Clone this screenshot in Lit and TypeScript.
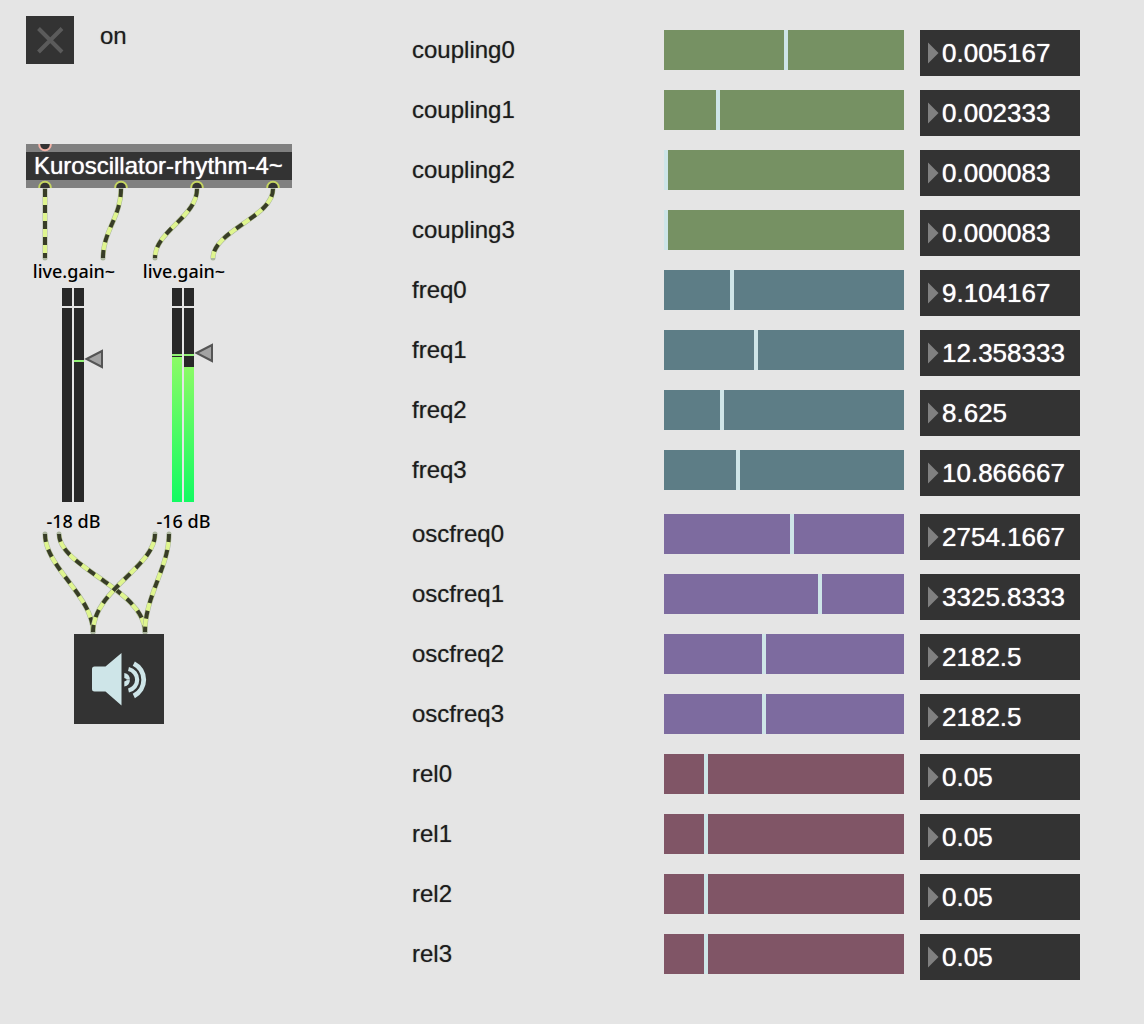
import { LitElement, html, svg, css } from "lit";
import { customElement, property } from "lit/decorators.js";

interface Param {
  name: string;
  value: string;
  position: number;
}

interface ParamGroup {
  tone: string;
  params: Param[];
}

/* Slider positions run from 0 to 236. */
const GROUPS: ParamGroup[] = [
  {
    tone: "green",
    params: [
      { name: "coupling0", value: "0.005167", position: 120 },
      { name: "coupling1", value: "0.002333", position: 52 },
      { name: "coupling2", value: "0.000083", position: 0 },
      { name: "coupling3", value: "0.000083", position: 0 },
    ],
  },
  {
    tone: "teal",
    params: [
      { name: "freq0", value: "9.104167", position: 66 },
      { name: "freq1", value: "12.358333", position: 90 },
      { name: "freq2", value: "8.625", position: 56 },
      { name: "freq3", value: "10.866667", position: 72 },
    ],
  },
  {
    tone: "violet",
    params: [
      { name: "oscfreq0", value: "2754.1667", position: 126 },
      { name: "oscfreq1", value: "3325.8333", position: 154 },
      { name: "oscfreq2", value: "2182.5", position: 98 },
      { name: "oscfreq3", value: "2182.5", position: 98 },
    ],
  },
  {
    tone: "wine",
    params: [
      { name: "rel0", value: "0.05", position: 40 },
      { name: "rel1", value: "0.05", position: 40 },
      { name: "rel2", value: "0.05", position: 40 },
      { name: "rel3", value: "0.05", position: 40 },
    ],
  },
];

/* One parameter: its name, a slider and a number box. */
@customElement("param-row")
export class ParamRow extends LitElement {
  @property({ attribute: false }) param!: Param;
  @property() tone = "green";

  static styles = css`
    :host {
      display: grid;
      grid-template-columns: 236px minmax(0, 1fr) 160px;
      column-gap: 16px;
      align-items: start;
      color: #1c1c1c;
      font-family: "Liberation Sans", Arial, sans-serif;
    }
    .name {
      font-size: 24px;
      line-height: 40px;
      text-shadow: 0 0 1px rgba(28, 28, 28, 0.5);
    }
    .slider {
      appearance: none;
      display: block;
      width: 100%;
      height: 40px;
      margin: 0;
      background: #769163;
    }
    .slider::-webkit-slider-thumb {
      appearance: none;
      width: 4px;
      height: 40px;
      background: #cee5e8;
    }
    .teal {
      background: #5d7d86;
    }
    .violet {
      background: #7d6b9f;
    }
    .wine {
      background: #805566;
    }
    .number {
      display: flex;
      align-items: center;
      gap: 3px;
      height: 46px;
      padding-left: 8px;
      background: #333333;
    }
    .marker {
      flex: none;
      display: block;
      width: 11px;
      height: 22px;
    }
    .field {
      flex: 1;
      min-width: 0;
      height: 46px;
      padding: 0;
      border: 0;
      background: transparent;
      color: #ffffff;
      font-family: inherit;
      font-size: 26px;
      text-shadow: 0 0 1px #ffffff;
    }
  `;

  render() {
    const { name, value, position } = this.param;
    return html`
      <label class="name" for="slider">${name}</label>
      <input
        id="slider"
        class="slider ${this.tone}"
        type="range"
        min="0"
        max="236"
        .value=${String(position)}
      />
      <div class="number">
        <svg class="marker" viewBox="0 0 11 22" aria-hidden="true">
          <path d="M0 0.5 L10.5 11 L0 21.5 Z" fill="#808080" />
        </svg>
        <input class="field" type="text" aria-label="${name} value" .value=${value} />
      </div>
    `;
  }
}

/* Stereo gain fader with level meters. */
@customElement("live-gain")
export class LiveGain extends LitElement {
  @property() level = "";
  @property({ type: Number }) fader = 0;
  @property({ attribute: false }) levels: number[] = [0, 0];
  @property({ attribute: false }) peaks: number[] = [-1, -1];

  static styles = css`
    :host {
      display: flex;
      flex-direction: column;
      align-items: center;
      width: 82px;
      color: #000000;
      font-family: "Noto Sans", sans-serif;
      font-size: 18px;
      font-weight: 500;
      line-height: 24px;
      white-space: nowrap;
    }
    .meters {
      display: flex;
      gap: 2px;
      align-self: stretch;
      height: 214px;
      margin: 5px 0 7px;
      padding-left: 29px;
    }
    .channel {
      position: relative;
      flex: none;
      display: flex;
      flex-direction: column;
      justify-content: flex-end;
      width: 10px;
      background: #282828;
    }
    .fill {
      background: linear-gradient(#8bfb66, #12fb62);
    }
    .zero,
    .peak {
      position: absolute;
      left: 0;
      right: 0;
      height: 2px;
      background: #e5e5e5;
    }
    .zero {
      top: 18px;
    }
    .peak {
      background: #93f277;
    }
    .fader {
      appearance: none;
      writing-mode: vertical-lr;
      direction: rtl;
      flex: none;
      width: 20px;
      height: 214px;
      margin: 0 0 0 -2px;
      background: transparent;
    }
    .fader::-webkit-slider-thumb {
      appearance: none;
      width: 20px;
      height: 20px;
      background: url("data:image/svg+xml,%3Csvg xmlns='http://www.w3.org/2000/svg' viewBox='0 0 20 20'%3E%3Cpath d='M2.5 10 L18 2 V18 Z' fill='%23a3a3a3' stroke='%23555555' stroke-width='2'/%3E%3C/svg%3E");
    }
    .level {
      padding-right: 1px;
    }
  `;

  render() {
    return html`
      <label for="fader">live.gain~</label>
      <div class="meters">
        ${this.levels.map(
          (height, i) => html`
            <div class="channel">
              <div class="fill" style="height:${height}px"></div>
              <div class="zero"></div>
              ${this.peaks[i] < 0
                ? ""
                : html`<div class="peak" style="top:${this.peaks[i]}px"></div>`}
            </div>
          `
        )}
        <input id="fader" class="fader" type="range" min="0" max="194" .value=${String(this.fader)} />
      </div>
      <div class="level">${this.level}</div>
    `;
  }
}

/* Patch cords as cubic curves from outlet to inlet. */
const CORDS = [
  "M45 189 L45 258",
  "M121 189 C121 217 103 231 103 258",
  "M197 189 C197 217 155 231 155 258",
  "M273 189 C273 217 213 231 213 258",
  "M45 534 C45 567 93 596 93 632",
  "M59 534 C59 567 145 590 145 632",
  "M155 534 C155 567 93 590 93 632",
  "M169 534 C169 567 145 596 145 632",
];

const OUTLETS = [19, 95, 171, 247];

@customElement("app-root")
export class AppRoot extends LitElement {
  static styles = css`
    :host {
      display: grid;
      grid-template-columns: 412px minmax(0, 1fr);
      min-height: 100vh;
      padding-right: 64px;
      box-sizing: border-box;
      background: #e5e5e5;
      color: #1c1c1c;
      font-family: "Liberation Sans", Arial, sans-serif;
      font-size: 24px;
    }
    .patch {
      position: relative;
    }
    .patch > * {
      position: absolute;
    }
    .cords {
      left: 0;
      top: 0;
      width: 412px;
      height: 740px;
    }
    .edge {
      fill: none;
      stroke: #abb59e;
      stroke-width: 5;
      stroke-linecap: round;
    }
    .light {
      fill: none;
      stroke: #dff58f;
      stroke-width: 4;
    }
    .dark {
      fill: none;
      stroke: #383d27;
      stroke-width: 4;
      stroke-dasharray: 8 8;
    }
    .switch {
      left: 26px;
      top: 16px;
      display: flex;
      gap: 26px;
    }
    .toggle {
      appearance: none;
      width: 48px;
      height: 48px;
      margin: 0;
      background: #333333
        url("data:image/svg+xml,%3Csvg xmlns='http://www.w3.org/2000/svg' viewBox='0 0 48 48'%3E%3Cpath d='M12.5 12.5 L36 36 M36 12.5 L12.5 36' stroke='%235b5b5b' stroke-width='4'/%3E%3C/svg%3E");
    }
    .caption {
      line-height: 40px;
      text-shadow: 0 0 1px rgba(28, 28, 28, 0.5);
    }
    .object {
      left: 26px;
      top: 144px;
      min-width: 250px;
      padding: 8px;
      background: linear-gradient(#808080 8px, #333333 8px 36px, #808080 36px);
      color: #ffffff;
      line-height: 28px;
      white-space: nowrap;
      text-shadow: 0 0 1px #ffffff;
    }
    .ports {
      position: absolute;
      left: 0;
      top: 0;
      width: 266px;
      height: 44px;
    }
    .gain-a {
      left: 33px;
      top: 259px;
    }
    .gain-b {
      left: 143px;
      top: 259px;
    }
    .dac {
      left: 74px;
      top: 634px;
      width: 90px;
      height: 90px;
      padding: 0;
      border: 0;
      background: #333333;
    }
    .speaker {
      display: block;
      width: 90px;
      height: 90px;
    }
    .params {
      display: flex;
      flex-direction: column;
      gap: 14px;
      padding: 30px 0;
    }
    .group {
      display: flex;
      flex-direction: column;
      gap: 14px;
    }
    .violet {
      padding-top: 4px;
    }
  `;

  render() {
    return html`
      <section class="patch" aria-label="Patch">
        <svg class="cords" viewBox="0 0 412 740" aria-hidden="true">
          ${CORDS.map(
            (d) => svg`
              <path class="edge" d=${d} />
              <path class="light" d=${d} />
              <path class="dark" d=${d} />
            `
          )}
        </svg>
        <div class="switch">
          <input id="power" class="toggle" type="checkbox" />
          <label class="caption" for="power">on</label>
        </div>
        <div class="object">
          Kuroscillator-rhythm-4~
          <svg class="ports" viewBox="0 0 266 44" aria-hidden="true">
            <circle cx="19" cy="0.5" r="5.8" fill="#333333" stroke="#f3b3a8" stroke-width="2" />
            ${OUTLETS.map(
              (x) => svg`<circle cx=${x} cy="43.5" r="5.8" fill="#333333" stroke="#c5d562" stroke-width="2" />`
            )}
          </svg>
        </div>
        <live-gain class="gain-a" level="-18 dB" fader="133" .levels=${[0, 0]} .peaks=${[-1, 72]}></live-gain>
        <live-gain class="gain-b" level="-16 dB" fader="139" .levels=${[145, 135]} .peaks=${[66, 66]}></live-gain>
        <button class="dac" type="button" aria-label="Audio output">
          <svg class="speaker" viewBox="0 0 90 90" aria-hidden="true">
            <path
              d="M18 35 Q18 32.5 20.5 32.5 H31.5 L47.5 19 V71.5 L31.5 57.5 H20.5 Q18 57.5 18 55 Z"
              fill="#cee5e8"
            />
            <path
              d="M50.3 39 A6.8 6.8 0 0 1 50.3 52.4 V47.5 L52.5 46.5 V45 L50.3 44 Z"
              fill="#cee5e8"
            />
            <path d="M50 45.7 H57" stroke="#333333" stroke-width="1" stroke-opacity="0.4" />
            <path
              d="M54.5 35 A11 11 0 0 1 54.5 56.5"
              fill="none"
              stroke="#cee5e8"
              stroke-width="4.2"
            />
            <path
              d="M59.8 29.7 A18.1 18.1 0 0 1 59.8 62"
              fill="none"
              stroke="#cee5e8"
              stroke-width="4.8"
            />
          </svg>
        </button>
      </section>
      <section class="params" aria-label="Parameters">
        ${GROUPS.map(
          (group) => html`
            <div class="group ${group.tone}">
              ${group.params.map(
                (param) => html`<param-row .param=${param} .tone=${group.tone}></param-row>`
              )}
            </div>
          `
        )}
      </section>
    `;
  }
}
